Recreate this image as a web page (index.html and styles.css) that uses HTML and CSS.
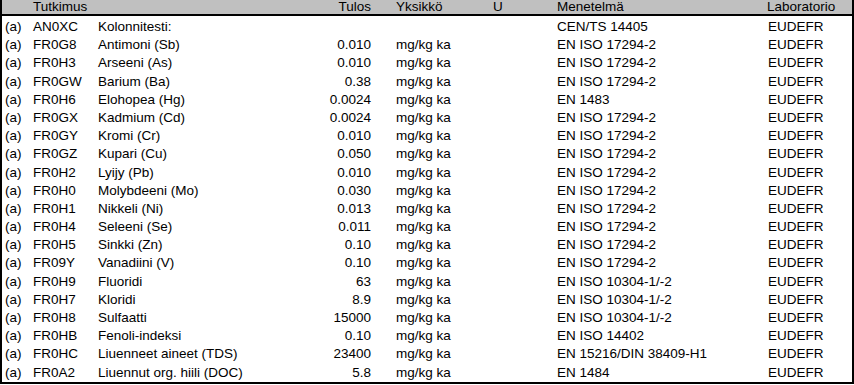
FILE: index.html
```html
<!DOCTYPE html>
<html lang="fi">
  <head>
    <meta charset="UTF-8" />
    <meta name="viewport" content="width=device-width, initial-scale=1.0" />
    <title>Tutkimukset</title>
    <link rel="stylesheet" href="styles.css">
  </head>
  <body>
    <div class="report">
      <div class="row head">
        <span></span><span>Tutkimus</span><span></span><span class="num">Tulos</span>
        <span class="unit">Yksikkö</span><span>U</span><span>Menetelmä</span><span class="lab">Laboratorio</span>
      </div>
      <div class="rows">
        <div class="row"><span class="acc">(a)</span><span>AN0XC</span><span>Kolonnitesti:</span><span class="num"></span><span class="unit"></span><span></span><span>CEN/TS 14405</span><span>EUDEFR</span></div>
        <div class="row"><span class="acc">(a)</span><span>FR0G8</span><span>Antimoni (Sb)</span><span class="num">0.010</span><span class="unit">mg/kg ka</span><span></span><span>EN ISO 17294-2</span><span>EUDEFR</span></div>
        <div class="row"><span class="acc">(a)</span><span>FR0H3</span><span>Arseeni (As)</span><span class="num">0.010</span><span class="unit">mg/kg ka</span><span></span><span>EN ISO 17294-2</span><span>EUDEFR</span></div>
        <div class="row"><span class="acc">(a)</span><span>FR0GW</span><span>Barium (Ba)</span><span class="num">0.38</span><span class="unit">mg/kg ka</span><span></span><span>EN ISO 17294-2</span><span>EUDEFR</span></div>
        <div class="row"><span class="acc">(a)</span><span>FR0H6</span><span>Elohopea (Hg)</span><span class="num">0.0024</span><span class="unit">mg/kg ka</span><span></span><span>EN 1483</span><span>EUDEFR</span></div>
        <div class="row"><span class="acc">(a)</span><span>FR0GX</span><span>Kadmium (Cd)</span><span class="num">0.0024</span><span class="unit">mg/kg ka</span><span></span><span>EN ISO 17294-2</span><span>EUDEFR</span></div>
        <div class="row"><span class="acc">(a)</span><span>FR0GY</span><span>Kromi (Cr)</span><span class="num">0.010</span><span class="unit">mg/kg ka</span><span></span><span>EN ISO 17294-2</span><span>EUDEFR</span></div>
        <div class="row"><span class="acc">(a)</span><span>FR0GZ</span><span>Kupari (Cu)</span><span class="num">0.050</span><span class="unit">mg/kg ka</span><span></span><span>EN ISO 17294-2</span><span>EUDEFR</span></div>
        <div class="row"><span class="acc">(a)</span><span>FR0H2</span><span>Lyijy (Pb)</span><span class="num">0.010</span><span class="unit">mg/kg ka</span><span></span><span>EN ISO 17294-2</span><span>EUDEFR</span></div>
        <div class="row"><span class="acc">(a)</span><span>FR0H0</span><span>Molybdeeni (Mo)</span><span class="num">0.030</span><span class="unit">mg/kg ka</span><span></span><span>EN ISO 17294-2</span><span>EUDEFR</span></div>
        <div class="row"><span class="acc">(a)</span><span>FR0H1</span><span>Nikkeli (Ni)</span><span class="num">0.013</span><span class="unit">mg/kg ka</span><span></span><span>EN ISO 17294-2</span><span>EUDEFR</span></div>
        <div class="row"><span class="acc">(a)</span><span>FR0H4</span><span>Seleeni (Se)</span><span class="num">0.011</span><span class="unit">mg/kg ka</span><span></span><span>EN ISO 17294-2</span><span>EUDEFR</span></div>
        <div class="row"><span class="acc">(a)</span><span>FR0H5</span><span>Sinkki (Zn)</span><span class="num">0.10</span><span class="unit">mg/kg ka</span><span></span><span>EN ISO 17294-2</span><span>EUDEFR</span></div>
        <div class="row"><span class="acc">(a)</span><span>FR09Y</span><span>Vanadiini (V)</span><span class="num">0.10</span><span class="unit">mg/kg ka</span><span></span><span>EN ISO 17294-2</span><span>EUDEFR</span></div>
        <div class="row"><span class="acc">(a)</span><span>FR0H9</span><span>Fluoridi</span><span class="num">63</span><span class="unit">mg/kg ka</span><span></span><span>EN ISO 10304-1/-2</span><span>EUDEFR</span></div>
        <div class="row"><span class="acc">(a)</span><span>FR0H7</span><span>Kloridi</span><span class="num">8.9</span><span class="unit">mg/kg ka</span><span></span><span>EN ISO 10304-1/-2</span><span>EUDEFR</span></div>
        <div class="row"><span class="acc">(a)</span><span>FR0H8</span><span>Sulfaatti</span><span class="num">15000</span><span class="unit">mg/kg ka</span><span></span><span>EN ISO 10304-1/-2</span><span>EUDEFR</span></div>
        <div class="row"><span class="acc">(a)</span><span>FR0HB</span><span>Fenoli-indeksi</span><span class="num">0.10</span><span class="unit">mg/kg ka</span><span></span><span>EN ISO 14402</span><span>EUDEFR</span></div>
        <div class="row"><span class="acc">(a)</span><span>FR0HC</span><span>Liuenneet aineet (TDS)</span><span class="num">23400</span><span class="unit">mg/kg ka</span><span></span><span>EN 15216/DIN 38409-H1</span><span>EUDEFR</span></div>
        <div class="row"><span class="acc">(a)</span><span>FR0A2</span><span>Liuennut org. hiili (DOC)</span><span class="num">5.8</span><span class="unit">mg/kg ka</span><span></span><span>EN 1484</span><span>EUDEFR</span></div>
      </div>
    </div>
  </body>
</html>
```
FILE: styles.css
```css
* {
  margin: 0;
  padding: 0;
  box-sizing: border-box;
}
body {
  background-color: #fff;
  color: #000;
  font-family: 'Liberation Sans', Arial, sans-serif;
  font-size: 13.5px;
}
.report {
  width: 854px;
  height: 384px;
  border-left: 2px solid #000;
  border-right: 2px solid #000;
  border-bottom: 2px solid #000;
}
.row {
  display: grid;
  grid-template-columns: 31px 65px 212px 61px 122px 64px 211px 84px;
  height: 18.2px;
  line-height: 18.2px;
  white-space: nowrap;
}
.row.head {
  height: 16px;
  line-height: 14px;
  background-color: #c0c0c0;
  border-bottom: 2px solid #000;
}
.rows {
  padding-top: 2px;
}
.acc {
  padding-left: 3px;
}
.num {
  text-align: right;
}
.unit {
  padding-left: 25px;
}
.head .lab {
  margin-left: -1px;
}
```
